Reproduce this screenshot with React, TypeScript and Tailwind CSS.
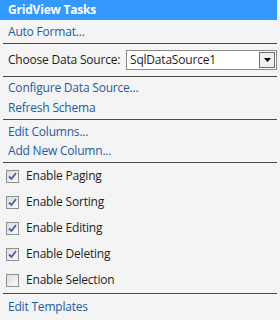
export default function App() {
  const checks = [
    { label: "Enable Paging", on: true },
    { label: "Enable Sorting", on: true },
    { label: "Enable Editing", on: true },
    { label: "Enable Deleting", on: true },
    { label: "Enable Selection", on: false },
  ];
  return (
    <div
      className="w-[280px] h-[320px] bg-[#f4f4f4] text-[12px] tracking-[-0.2px] text-[#1e1e1e] overflow-hidden"
      style={{ fontFamily: '"Open Sans", "Noto Sans", sans-serif' }}
    >
      <div className="h-[20px] mr-[3px] bg-[#3399ff] text-white font-bold pl-[8px] leading-[20px]">
        GridView Tasks
      </div>
      <div className="mx-[3px]">
        <div className="h-[23px] pl-[5px] flex items-center text-[#1d5ba4]">Auto Format...</div>
        <div className="h-px bg-[#4a4a4a]" />
        <div className="h-[32px] pl-[5px] flex items-center">
          <span className="w-[118px]">Choose Data Source:</span>
          <div className="flex-1 h-[20px] bg-white border border-[#8a8a8a] flex items-center pl-[3px]">
            <span className="flex-1">SqlDataSource1</span>
            <div className="w-[16px] h-[16px] mr-[1px] border border-[#6e6e6e] bg-[#f0f0f0] flex items-center justify-center">
              <svg width="7" height="4" viewBox="0 0 7 4">
                <path d="M0 0h7L3.5 4z" fill="#000" />
              </svg>
            </div>
          </div>
        </div>
        <div className="h-px bg-[#4a4a4a]" />
        <div className="h-[20px] pl-[5px] flex items-end text-[#1d5ba4]">Configure Data Source...</div>
        <div className="h-[21px] pl-[5px] flex items-center text-[#1d5ba4]">Refresh Schema</div>
        <div className="h-px mt-[1px] bg-[#4a4a4a]" />
        <div className="h-[21px] pl-[5px] flex items-end text-[#1d5ba4]">Edit Columns...</div>
        <div className="h-[20px] pl-[5px] flex items-center text-[#1d5ba4]">Add New Column...</div>
        <div className="h-px mt-[1px] bg-[#4a4a4a]" />
        <div>
          {checks.map((c) => (
            <div key={c.label} className="h-[26px] flex items-center pl-[3px]">
              <div className="w-[13px] h-[13px] border border-[#8e8f8f] bg-gradient-to-br from-[#dcdcdc] to-[#fbfbfb] flex items-center justify-center">
                {c.on && (
                  <svg width="9" height="9" viewBox="0 0 9 9">
                    <path d="M1 4.5l2.5 2.5L8 1" stroke="#4a5fa8" strokeWidth="1.8" fill="none" />
                  </svg>
                )}
              </div>
              <span className="ml-[7px]">{c.label}</span>
            </div>
          ))}
        </div>
        <div className="h-px bg-[#4a4a4a]" />
        <div className="h-[25px] pl-[5px] flex items-center text-[#1d5ba4]">Edit Templates</div>
      </div>
    </div>
  );
}
